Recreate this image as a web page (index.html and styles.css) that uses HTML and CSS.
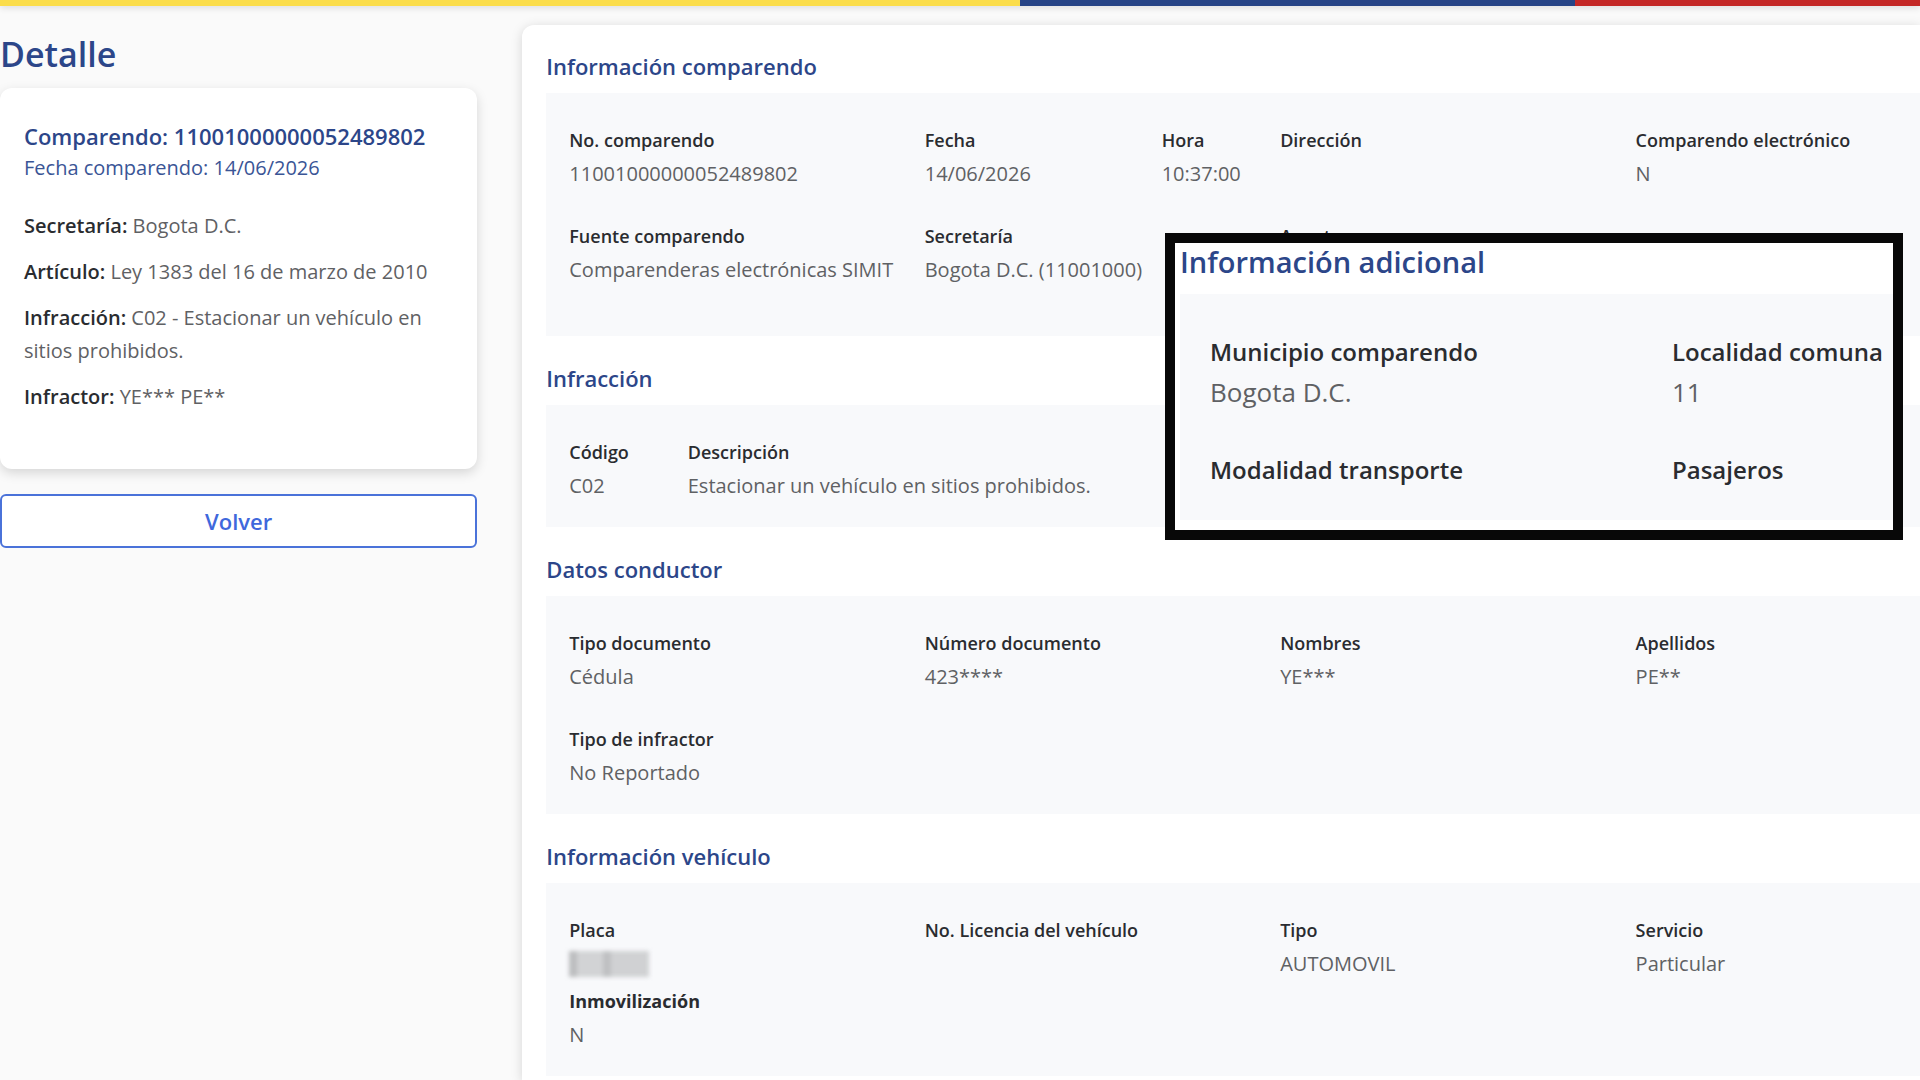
FILE: index.html
```html
<!DOCTYPE html>
<html lang="es">
<head>
    <meta charset="UTF-8">
    <meta name="viewport" content="width=device-width, initial-scale=1.0">
    <title>Detalle comparendo</title>
    <link rel="stylesheet" href="styles.css">
</head>
<body>
<div class="flag-bar">
    <span class="yellow"></span>
    <span class="blue"></span>
    <span class="red"></span>
</div>

<div class="layout">
    <aside class="sidebar">
        <h1>Detalle</h1>
        <div class="card">
            <h2>Comparendo: 11001000000052489802</h2>
            <p class="date">Fecha comparendo: 14/06/2026</p>
            <p><strong>Secretaría:</strong> Bogota D.C.</p>
            <p><strong>Artículo:</strong> Ley 1383 del 16 de marzo de 2010</p>
            <p><strong>Infracción:</strong> C02 - Estacionar un vehículo en sitios prohibidos.</p>
            <p><strong>Infractor:</strong> YE*** PE**</p>
        </div>
        <button type="button" class="back-btn">Volver</button>
    </aside>

    <main class="panel">
        <section>
            <h3>Información comparendo</h3>
            <dl class="box box-tall">
                <div class="span-3"><dt>No. comparendo</dt><dd>11001000000052489802</dd></div>
                <div class="span-2"><dt>Fecha</dt><dd>14/06/2026</dd></div>
                <div class="span-1"><dt>Hora</dt><dd>10:37:00</dd></div>
                <div class="span-3"><dt>Dirección</dt><dd></dd></div>
                <div class="span-3"><dt>Comparendo electrónico</dt><dd>N</dd></div>
                <div class="span-3"><dt>Fuente comparendo</dt><dd>Comparenderas electrónicas SIMIT</dd></div>
                <div class="span-3"><dt>Secretaría</dt><dd>Bogota D.C. (11001000)</dd></div>
                <div class="span-3"><dt>Agente</dt><dd></dd></div>
            </dl>
        </section>

        <section>
            <h3>Infracción</h3>
            <dl class="box">
                <div class="span-1"><dt>Código</dt><dd>C02</dd></div>
                <div class="span-8"><dt>Descripción</dt><dd>Estacionar un vehículo en sitios prohibidos.</dd></div>
            </dl>
        </section>

        <section>
            <h3>Datos conductor</h3>
            <dl class="box">
                <div class="span-3"><dt>Tipo documento</dt><dd>Cédula</dd></div>
                <div class="span-3"><dt>Número documento</dt><dd>423****</dd></div>
                <div class="span-3"><dt>Nombres</dt><dd>YE***</dd></div>
                <div class="span-3"><dt>Apellidos</dt><dd>PE**</dd></div>
                <div class="span-3"><dt>Tipo de infractor</dt><dd>No Reportado</dd></div>
            </dl>
        </section>

        <section>
            <h3>Información vehículo</h3>
            <dl class="box box-compact">
                <div class="span-3"><dt>Placa</dt><dd class="plate"><span class="masked"></span></dd></div>
                <div class="span-3"><dt>No. Licencia del vehículo</dt><dd></dd></div>
                <div class="span-3"><dt>Tipo</dt><dd>AUTOMOVIL</dd></div>
                <div class="span-3"><dt>Servicio</dt><dd>Particular</dd></div>
                <div class="span-3"><dt class="bold">Inmovilización</dt><dd>N</dd></div>
            </dl>
        </section>
    </main>
</div>

<section class="callout">
    <h3>Información adicional</h3>
    <dl class="callout-box">
        <div><dt>Municipio comparendo</dt><dd>Bogota D.C.</dd></div>
        <div><dt>Localidad comuna</dt><dd>11</dd></div>
        <div><dt>Modalidad transporte</dt></div>
        <div><dt>Pasajeros</dt></div>
    </dl>
</section>
</body>
</html>
```
FILE: styles.css
```css
* {
    box-sizing: border-box;
}

body {
    position: relative;
    display: flex;
    flex-direction: column;
    margin: 0;
    min-height: 100vh;
    background-color: #fafafa;
    color: #5f6164;
    font-family: "Open Sans", "Noto Sans", sans-serif;
    font-size: 20px;
    line-height: 33px;
}

h1, h2, h3, p, dl, dd {
    margin: 0;
}

h1, h2, h3 {
    color: #2c4689;
    font-weight: 600;
}

strong, dt {
    color: #2a2c30;
    font-weight: 600;
}

.flag-bar {
    display: flex;
    height: 6px;
    box-shadow: 0 2px 6px rgba(0, 0, 0, 0.12);
}

.yellow {
    flex: 68;
    background-color: #fbdd4b;
}

.blue {
    flex: 37;
    background-color: #264486;
}

.red {
    flex: 23;
    background-color: #c42826;
}

.layout {
    display: grid;
    flex: 1;
    grid-template-columns: 14fr 41fr;
    gap: 45px;
    padding-top: 19px;
}

.sidebar h1 {
    padding-top: 4px;
    margin-bottom: 8px;
    font-size: 34px;
    line-height: 51px;
}

.card {
    padding: 33px 24px 43px;
    border-radius: 12px;
    background-color: #fff;
    box-shadow: 0 4px 12px rgba(0, 0, 0, 0.15);
}

.card h2 {
    font-size: 22px;
    line-height: 30px;
}

.card p {
    margin-bottom: 13px;
}

.card .date {
    margin-bottom: 25px;
    color: #3a5596;
}

.back-btn {
    width: 100%;
    height: 54px;
    margin-top: 25px;
    border: 2px solid #4a72d9;
    border-radius: 6px;
    background-color: #fff;
    color: #3f68dc;
    font-family: inherit;
    font-size: 22px;
    font-weight: 600;
    cursor: pointer;
}

.panel {
    padding: 25px 0 0 24px;
    border-radius: 12px 0 0 0;
    background-color: #fff;
    box-shadow: 0 2px 12px rgba(0, 0, 0, 0.15);
}

.panel h3 {
    margin-bottom: 10px;
    font-size: 22px;
}

.panel section + section {
    margin-top: 26px;
}

/* last three columns are narrower, the box touches the window edge */
.box {
    display: grid;
    grid-template-columns: repeat(9, minmax(0, 5fr)) repeat(3, minmax(0, 4fr));
    row-gap: 30px;
    padding: 31px 0 25px 23px;
    background-color: #f8f9fb;
    white-space: nowrap;
}

.box-tall {
    padding-bottom: 50px;
}

.box-compact {
    row-gap: 5px;
}

.box dt {
    font-size: 18px;
}

.box dd {
    min-height: 33px;
}

.box .bold {
    font-weight: 700;
}

.span-1 {
    grid-column: span 1;
}

.span-2 {
    grid-column: span 2;
}

.span-3 {
    grid-column: span 3;
}

.span-8 {
    grid-column: span 8;
}

.plate {
    display: flex;
    align-items: center;
}

.masked {
    width: 80px;
    height: 26px;
    background: linear-gradient(90deg, #bcbdbf 8px, #d2d3d5 8px, #d2d3d5 34px, #bfc0c2 34px, #bfc0c2 42px, #d0d1d3 42px);
    filter: blur(2px);
}

.callout {
    position: absolute;
    top: 233px;
    right: 17px;
    width: 738px;
    padding: 0 0 10px 5px;
    border: 10px solid #080808;
    background-color: #fff;
}

.callout h3 {
    margin-bottom: 14px;
    font-size: 29px;
    line-height: 37px;
}

.callout-box {
    display: grid;
    grid-template-columns: 462px 1fr;
    row-gap: 36px;
    padding: 37px 0 30px 30px;
    background-color: #f8f9fb;
    font-size: 26px;
    line-height: 41px;
    white-space: nowrap;
}

.callout-box dt {
    font-size: 24px;
}
```
